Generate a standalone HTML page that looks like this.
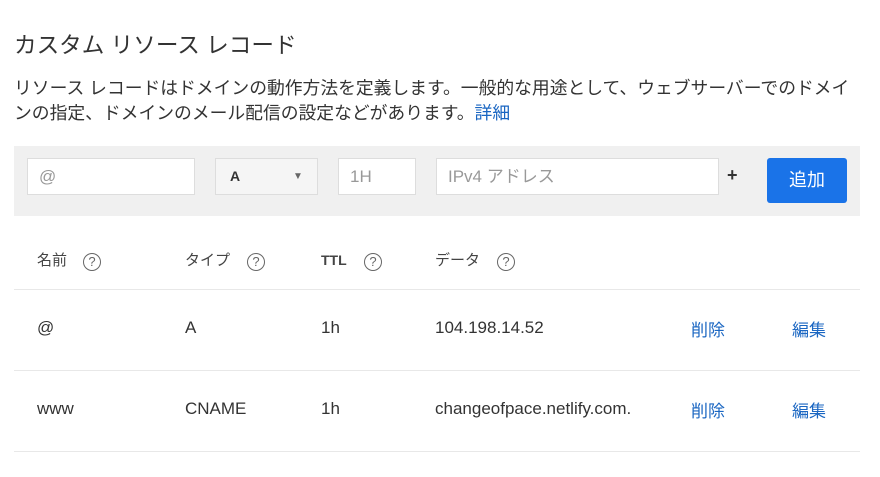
<!DOCTYPE html>
<html><head><meta charset="utf-8"><style>
body{margin:0;width:880px;height:477px;background:#fff;font-family:"Liberation Sans","Noto Sans CJK JP",sans-serif;color:#333;position:relative;overflow:hidden}
.a{position:absolute;white-space:nowrap}
.inp{position:absolute;background:#fff;border:1px solid #ddd;box-sizing:border-box;height:37px;top:158px;font-size:17px;color:#999;line-height:35px;padding-left:11px}
.q{position:absolute;top:2px;width:16px;height:16px;border:1.6px solid #666;border-radius:50%;font-size:13px;line-height:16px;text-align:center;color:#666;font-weight:normal}
.h{position:absolute;top:251px;font-size:15px;color:#444;height:20px;line-height:20px}
.r{position:absolute;font-size:17px;color:#333}
.l{color:#1a66c2}
.line{position:absolute;left:14px;width:846px;height:1px;background:#e8e8e8}
</style></head><body>
<div class="a" style="left:14px;top:27px;font-size:22.6px;color:#333">カスタム リソース レコード</div>
<div class="a" style="left:14px;top:76px;font-size:17.8px;line-height:25px;color:#333">リソース レコードはドメインの動作方法を定義します。一般的な用途として、ウェブサーバーでのドメイ<br>ンの指定、ドメインのメール配信の設定などがあります。<span class="l">詳細</span></div>
<div style="position:absolute;left:14px;top:146px;width:846px;height:70px;background:#f0f0f0"></div>
<div class="inp" style="left:27px;width:168px">@</div>
<div class="inp" style="left:215px;width:103px;background:#f5f5f5;color:#333;font-weight:bold;font-size:14px;padding-left:14px">A<span style="position:absolute;left:77px;top:0;font-size:10px;color:#666">▼</span></div>
<div class="inp" style="left:338px;width:78px">1H</div>
<div class="inp" style="left:436px;width:283px">IPv4 アドレス</div>
<div class="a" style="left:727px;top:165px;font-size:18px;font-weight:bold;color:#333">+</div>
<div style="position:absolute;left:767px;top:158px;width:80px;height:45px;background:#1a73e8;border-radius:3px;color:#fff;font-size:18px;text-align:center;line-height:45px">追加</div>
<div class="h" style="left:37px">名前<span class="q" style="left:46px">?</span></div>
<div class="h" style="left:185px">タイプ<span class="q" style="left:62px">?</span></div>
<div class="h" style="left:321px;font-weight:bold;font-size:14px;top:250px">TTL<span class="q" style="left:43px;top:3px">?</span></div>
<div class="h" style="left:435px">データ<span class="q" style="left:62px">?</span></div>
<div class="line" style="top:289px"></div>
<div class="r" style="left:37px;top:318px">@</div>
<div class="r" style="left:185px;top:318px">A</div>
<div class="r" style="left:321px;top:318px">1h</div>
<div class="r" style="left:435px;top:318px">104.198.14.52</div>
<div class="r l" style="left:691px;top:316px">削除</div>
<div class="r l" style="left:792px;top:316px">編集</div>
<div class="line" style="top:370px"></div>
<div class="r" style="left:37px;top:399px">www</div>
<div class="r" style="left:185px;top:399px">CNAME</div>
<div class="r" style="left:321px;top:399px">1h</div>
<div class="r" style="left:435px;top:399px">changeofpace.netlify.com.</div>
<div class="r l" style="left:691px;top:397px">削除</div>
<div class="r l" style="left:792px;top:397px">編集</div>
<div class="line" style="top:451px"></div>
</body></html>
